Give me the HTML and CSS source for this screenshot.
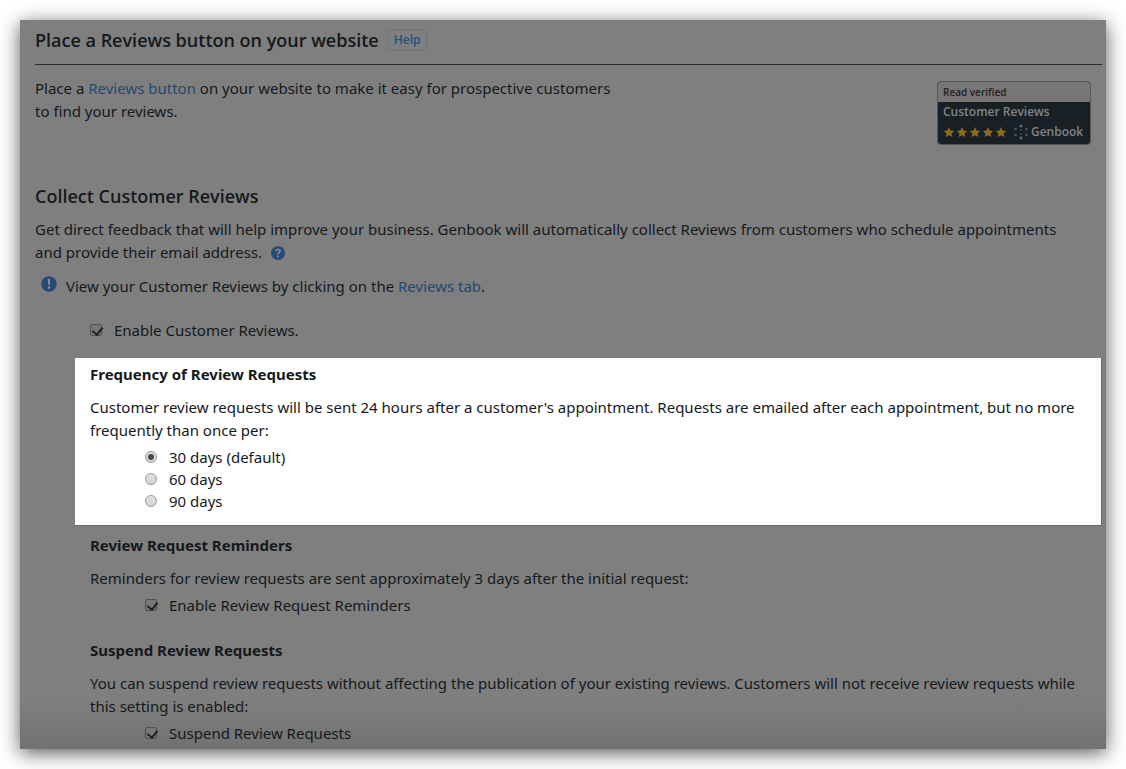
FILE: index.html
```html
<!DOCTYPE html>
<html lang="en">
<head>
<meta charset="utf-8">
<title>Customer Reviews settings</title>
<link rel="stylesheet" href="styles.css">
</head>
<body>
<main class="panel">
  <header class="panel-header">
    <h1 class="heading">Place a Reviews button on your website</h1>
    <button class="help-button" type="button">Help</button>
  </header>
  <section class="intro">
    <p class="intro-text">Place a <a href="#">Reviews button</a> on your website to make it easy for prospective customers to find your reviews.</p>
    <div class="badge">
      <div class="badge-top">Read verified</div>
      <div class="badge-body">
        <div class="badge-title">Customer Reviews</div>
        <div class="badge-row">
          <svg class="stars" viewBox="0 0 65 12" role="img" aria-label="Five stars">
            <defs><path id="star" d="M6 1l1.6 3.5 3.7.4-2.8 2.5.8 3.7L6 9.2l-3.3 1.9.8-3.7L.7 4.9l3.7-.4z"/></defs>
            <use href="#star"/><use href="#star" x="13"/><use href="#star" x="26"/><use href="#star" x="39"/><use href="#star" x="52"/>
          </svg>
          <svg class="brand-mark" viewBox="0 0 16 16" aria-hidden="true">
            <g fill="#454a66"><circle cx="8" cy="2" r="1.5" fill="#606474"/><circle cx="8" cy="14" r="1.4" fill="#606474"/><circle cx="2.5" cy="5" r="1.5"/><circle cx="2.5" cy="11" r="1.5"/><circle cx="13.5" cy="5" r="1.5"/><circle cx="13.5" cy="11" r="1.5"/><circle cx="8" cy="6.3" r="1" fill="#34506b"/><circle cx="8" cy="10" r="1" fill="#34506b"/></g>
          </svg>
          <span class="brand-name">Genbook</span>
        </div>
      </div>
    </div>
  </section>
  <section class="collect">
    <h2 class="heading">Collect Customer Reviews</h2>
    <p class="collect-text">Get direct feedback that will help improve your business. Genbook will automatically collect Reviews from customers who schedule appointments and provide their email address.
      <button class="info-button" type="button" aria-label="More information"><svg class="info-icon" viewBox="0 0 14 14" aria-hidden="true"><circle cx="7" cy="7" r="7" fill="#254a75"/><path d="M4.9 5.3C5 2.8 9.2 2.9 9.1 5.2 9 6.8 7 6.6 7 8.4" fill="none" stroke="#8c8c8c" stroke-width="1.6"/><circle cx="7" cy="10.6" r="1" fill="#8c8c8c"/></svg></button></p>
    <div class="note">
      <svg class="note-icon" viewBox="0 0 16 16" aria-hidden="true"><circle cx="8" cy="8" r="7.7" fill="#254a75"/><path d="M6.8 3h2.4l-.5 6H7.3z" fill="#8c8c8c"/><circle cx="8" cy="11.6" r="1.3" fill="#8c8c8c"/></svg>
      <p>View your Customer Reviews by clicking on the <a href="#">Reviews tab</a>.</p>
    </div>
    <label class="option enable"><input class="check" type="checkbox" checked>Enable Customer Reviews.</label>
  </section>
  <section class="group spotlight">
    <h3>Frequency of Review Requests</h3>
    <p>Customer review requests will be sent 24 hours after a customer's appointment. Requests are emailed after each appointment, but no more frequently than once per:</p>
    <div class="options">
      <label class="option"><input class="radio" type="radio" name="frequency" checked>30 days (default)</label>
      <label class="option"><input class="radio" type="radio" name="frequency">60 days</label>
      <label class="option"><input class="radio" type="radio" name="frequency">90 days</label>
    </div>
  </section>
  <section class="group">
    <h3>Review Request Reminders</h3>
    <p>Reminders for review requests are sent approximately 3 days after the initial request:</p>
    <div class="options">
      <label class="option"><input class="check" type="checkbox" checked>Enable Review Request Reminders</label>
    </div>
  </section>
  <section class="group">
    <h3>Suspend Review Requests</h3>
    <p>You can suspend review requests without affecting the publication of your existing reviews. Customers will not receive review requests while this setting is enabled:</p>
    <div class="options">
      <label class="option"><input class="check" type="checkbox" checked>Suspend Review Requests</label>
    </div>
  </section>
</main>
</body>
</html>
```
FILE: styles.css
```css
* { box-sizing: border-box; }
body {
  margin: 0;
  padding: 20px;
  background: #fff;
  color: #15191d;
  font: 15px/23px "Noto Sans", "Open Sans", sans-serif;
}
h1, h2, h3, p { margin: 0; }
a { color: #25486f; text-decoration: none; }
.panel {
  padding: 0 4px 5px 15px;
  background: linear-gradient(to top, #717171, #7f7f7f 50px);
  box-shadow: 0 4px 18px rgba(0, 0, 0, .65);
}
.heading {
  font-family: "Open Sans", sans-serif;
  font-size: 18px;
  line-height: 24px;
  font-weight: 600;
}
.panel-header {
  display: flex;
  align-items: center;
  gap: 8px;
  height: 45px;
  padding-bottom: 5px;
  border-bottom: 1px solid #2b2d2f;
}
.help-button {
  height: 22px;
  padding: 0 6px;
  border: 1px solid #727477;
  border-radius: 2px;
  background: none;
  color: #25507f;
  font: 600 12px/20px "Open Sans", sans-serif;
}
.intro {
  display: flex;
  justify-content: space-between;
  align-items: flex-start;
  padding: 12px 11px 39px 0;
}
.intro-text { max-width: 590px; }
.badge {
  width: 154px;
  margin-top: 4px;
  border: 1px solid #55585b;
  border-radius: 4px;
  overflow: hidden;
  background: #182026;
  font-family: "Open Sans", sans-serif;
  font-weight: 600;
}
.badge-top {
  padding: 0 5px;
  background: #777576;
  color: #222;
  font-size: 10px;
  line-height: 20px;
}
.badge-body { padding: 0 5px 3px; color: #808487; }
.badge-title { font-size: 12px; line-height: 20px; }
.badge-row { display: flex; align-items: center; line-height: 19px; }
.stars { width: 65px; height: 12px; fill: #8e6a1c; }
.brand-mark { width: 16px; height: 16px; margin-left: 5px; }
.brand-name { margin-left: 2px; font-size: 12px; }
.collect-text { margin-top: 10px; padding-right: 20px; }
.info-button {
  margin-left: 5px;
  padding: 0;
  border: 0;
  background: none;
  vertical-align: middle;
  line-height: 0;
}
.info-icon { width: 14px; height: 14px; margin-bottom: 2px; }
.note { display: flex; gap: 9px; margin: 11px 0 0 6px; }
.note-icon { width: 16px; height: 16px; margin-top: 1px; }
.option { display: flex; align-items: center; line-height: 22px; }
.enable { margin: 21px 0 17px 55px; }
.check, .radio {
  appearance: none;
  width: 12px;
  height: 12px;
  margin: 0 12px 0 0;
  border: 1px solid #505050;
  border-radius: 2px;
  background: #777;
}
.check::before {
  content: "";
  display: block;
  width: 5px;
  height: 8px;
  margin: 0 0 0 3px;
  border: solid #202020;
  border-width: 0 2px 2px 0;
  transform: rotate(38deg);
}
.radio {
  display: grid;
  place-items: center;
  border-color: #999;
  border-radius: 50%;
  background: linear-gradient(#e2e2e2, #d2d2d2);
}
.radio:checked::before {
  content: "";
  width: 6px;
  height: 6px;
  border-radius: 50%;
  background: #484848;
}
.group { padding: 0 0 23px 55px; }
.group h3 { font-size: 15px; line-height: 23px; font-weight: 700; }
.group p { margin-top: 10px; }
.group:last-child { padding-bottom: 0; }
.options { padding: 4px 0 0 55px; }
.spotlight {
  margin: 0 0 8px 40px;
  padding: 5px 0 13px 15px;
  border: solid #68696c;
  border-width: 0 1px 1px 0;
  background: #fff;
}
```
